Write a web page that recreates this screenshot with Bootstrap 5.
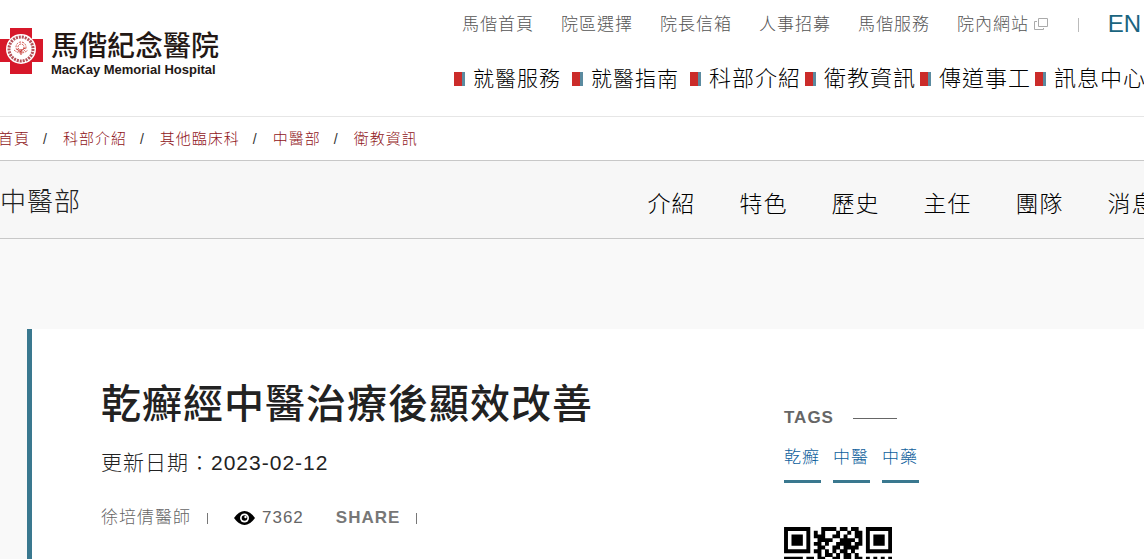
<!DOCTYPE html>
<html lang="zh-Hant">
<head>
<meta charset="utf-8">
<meta name="viewport" content="width=device-width, initial-scale=1">
<title>乾癬經中醫治療後顯效改善 - 馬偕紀念醫院</title>
<link href="https://cdn.jsdelivr.net/npm/bootstrap@5.3.0/dist/css/bootstrap.min.css" rel="stylesheet">
<style>
body{font-family:"Liberation Sans","Noto Sans CJK TC",sans-serif;font-weight:300;letter-spacing:1px;background:#f9f9f9;color:#222;overflow-x:hidden}
a{color:inherit;text-decoration:none;white-space:nowrap}
.site-head{height:117px;border-bottom:1px solid #e6e6e6}
.brand{padding-top:28px;gap:8px;letter-spacing:0;color:#231815}
.brand-cn{font-size:28px;line-height:34px;font-weight:500;padding-top:2px}
.brand-en{font-size:13px;line-height:11px;font-weight:700}
.top-links{font-size:17px;line-height:24px;color:#555;gap:27px;padding-top:13px}
.top-links svg{margin:-4px 0 0 -1px}
.lang{font-size:24px;line-height:24px;letter-spacing:0;color:#1a6480;margin:-3px 3px 0 2px}
.top-rule{width:1px;height:14px;background:#bbb;margin-left:2px}
.main-links{line-height:32px;padding-top:26px;color:#000;margin-right:-2px}
.main-links a{display:flex;align-items:center;font-size:22px;margin-left:4px}
.main-links a::before{content:"";width:11px;height:14px;margin-right:8px;background:linear-gradient(90deg,#cb2c2a 8px,#5b8ba0 8px)}
.main-links .roomy{font-size:21px;margin-right:7px}
.crumbs{height:43px;font-size:15px;line-height:22px;padding-top:11px;color:#8f1420;margin-left:-2px}
.crumbs li+li::before{content:"/";color:#333;font-size:14px;padding:0 15px 0 13px}
.dept{display:grid;grid-template-columns:56.6% max-content;height:79px;background:#f7f7f7;border-top:1px solid #c8c8c8;border-bottom:1px solid #c8c8c8;overflow:hidden}
.dept-name{font-size:26px;line-height:40px;font-weight:300;padding-top:21px}
.dept-links{font-size:23px;line-height:40px;gap:44px;padding-top:23px;color:#000}
.article{margin:90px 0 0 27px;border-left:5px solid #3a788f;background:#fff;min-height:230px;padding-left:69px;display:grid;grid-template-columns:683px 1fr}
.headline{font-size:40px;line-height:56px;font-weight:500;padding-top:47px}
.dated{font-size:21px;line-height:30px;padding-top:16px}
.meta{font-size:17px;line-height:24px;padding-top:28px;color:#666}
.meta .views{margin-left:26px;gap:7px}
.meta .share{margin-left:32px;font-weight:700;letter-spacing:1px;color:#777}
.tick{width:1px;height:11px;background:#777}
.tags-title{font-size:17px;line-height:24px;font-weight:700;color:#666;padding-top:77px;gap:19px}
.tags-title::after{content:"";width:44px;height:1px;background:#666}
.tag-list{gap:12px;padding-top:13px;margin-bottom:44px}
.tag-list a{font-size:17px;line-height:30px;color:#0f5f9c;min-width:37px;padding-bottom:7px;border-bottom:3px solid #3a788f}
</style>
</head>
<body>
<header class="site-head bg-white d-flex justify-content-between">
<a href="#" class="brand d-flex align-items-start">
<svg width="43" height="46" viewBox="0 0 43 46" aria-hidden="true">
<path fill="#d7182a" d="M10 0h22v11h11v23H32v12H10V34H0V11h10z"/>
<circle cx="21" cy="21" r="15" fill="#fff"/>
<circle cx="21" cy="21" r="12" fill="none" stroke="#b5525a" stroke-width="3" stroke-dasharray="2 1"/>
<path d="M21 27v-6m0 3l-4-3m4 2l4-3" stroke="#c4322f" fill="none"/>
<g fill="none" stroke="#d0524c" stroke-dasharray="2 1"><circle cx="21" cy="19" r="5"/><circle cx="21" cy="19" r="3"/><path d="M14 22q7 6 14 0" /></g>
</svg>
<span class="d-flex flex-column"><span class="brand-cn">馬偕紀念醫院</span><span class="brand-en">MacKay Memorial Hospital</span></span>
</a>
<div>
<nav class="top-links d-flex align-items-center justify-content-end" aria-label="網站連結">
<a href="#">馬偕首頁</a><a href="#">院區選擇</a><a href="#">院長信箱</a><a href="#">人事招募</a><a href="#">馬偕服務</a>
<a href="#">院內網站 <svg width="15" height="12" viewBox="0 0 15 12" fill="none" stroke="#aaa" aria-hidden="true"><path d="M4.500.5h9v8h-9zM3 3.500H.5v8h9V10"/></svg></a>
<span class="top-rule"></span><a href="#" class="lang">EN</a>
</nav>
<nav class="main-links d-flex justify-content-end" aria-label="主選單">
<a href="#" class="roomy">就醫服務</a><a href="#" class="roomy">就醫指南</a><a href="#">科部介紹</a><a href="#">衛教資訊</a><a href="#">傳道事工</a><a href="#">訊息中心</a>
</nav>
</div>
</header>
<nav class="bg-white" aria-label="路徑"><ol class="crumbs list-unstyled d-flex mb-0">
<li><a href="#">首頁</a></li><li><a href="#">科部介紹</a></li><li><a href="#">其他臨床科</a></li><li><a href="#">中醫部</a></li><li><a href="#">衛教資訊</a></li>
</ol></nav>
<section class="dept">
<h2 class="dept-name mb-0">中醫部</h2>
<nav class="dept-links d-flex" aria-label="科部選單"><a href="#">介紹</a><a href="#">特色</a><a href="#">歷史</a><a href="#">主任</a><a href="#">團隊</a><a href="#">消息</a></nav>
</section>
<main class="article">
<div>
<h1 class="headline mb-0">乾癬經中醫治療後顯效改善</h1>
<p class="dated mb-0">更新日期：2023-02-12</p>
<div class="meta d-flex align-items-center">
<span>徐培倩醫師</span><span class="tick ms-3"></span>
<span class="views d-flex align-items-center"><svg width="21" height="14" viewBox="0 0 21 14" aria-hidden="true"><path d="M0 7Q5 0 10.500 0T21 7Q16 14 10.500 14T0 7z"/><circle cx="10.500" cy="7" r="4.500" fill="#fff"/><circle cx="10.500" cy="7" r="2.800"/><circle cx="11.500" cy="6" r="1.200" fill="#fff"/></svg><span>7362</span></span>
<button type="button" class="share border-0 bg-transparent p-0">SHARE</button><span class="tick ms-3"></span>
</div>
</div>
<aside>
<h2 class="tags-title d-flex align-items-center mb-0">TAGS</h2>
<div class="tag-list d-flex"><a href="#">乾癬</a><a href="#">中醫</a><a href="#">中藥</a></div>
<svg id="qr" class="d-block" width="108" height="32" viewBox="0 0 29 8.600" role="img" aria-label="QR Code"></svg>
</aside>
</main>
<script>
const rows=[
"1111111...1111.11.11..1111111",
"1.....1.1.1...1..1.11.1.....1",
"1.111.1.111..11.1..11.1.111.1",
"1.111.1..1111..1111.1.1.111.1",
"1.111.1.11.1..1111.11.1.111.1",
"1.....1..11..11.1111..1.....1",
"1111111.11.1.1.11.1...1111111",
".........1.11.1.11.1.........",
"11111.11.11..11.11.11.1.1.1.1"];
document.getElementById("qr").innerHTML='<path d="'+rows.map((r,y)=>[...r].map((c,x)=>c==="1"?`M${x} ${y}h1.05v1.05h-1.05z`:"").join("")).join("")+'"/>';
</script>
<script src="https://cdn.jsdelivr.net/npm/bootstrap@5.3.0/dist/js/bootstrap.bundle.min.js"></script>
</body>
</html>
